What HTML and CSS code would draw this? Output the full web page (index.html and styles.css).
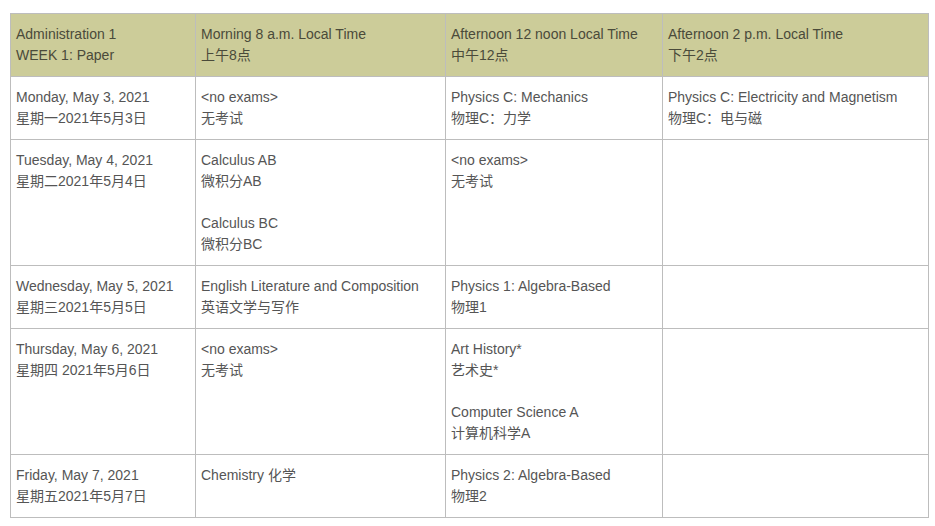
FILE: index.html
```html
<!DOCTYPE html>
<html lang="zh-CN">
<head>
<meta charset="utf-8">
<link rel="stylesheet" href="styles.css">
</head>
<body>
<table class="schedule">
  <colgroup>
    <col class="c1"><col class="c2"><col class="c3"><col class="c4">
  </colgroup>
  <thead>
    <tr>
      <th>Administration 1<br>WEEK 1: Paper</th>
      <th>Morning 8 a.m. Local Time<br>上午8点</th>
      <th>Afternoon 12 noon Local Time<br>中午12点</th>
      <th>Afternoon 2 p.m. Local Time<br>下午2点</th>
    </tr>
  </thead>
  <tbody>
    <tr>
      <td>Monday, May 3, 2021<br>星期一2021年5月3日</td>
      <td>&lt;no exams&gt;<br>无考试</td>
      <td>Physics C: Mechanics<br>物理C：力学</td>
      <td>Physics C: Electricity and Magnetism<br>物理C：电与磁</td>
    </tr>
    <tr>
      <td>Tuesday, May 4, 2021<br>星期二2021年5月4日</td>
      <td>Calculus AB<br>微积分AB<br><br>Calculus BC<br>微积分BC</td>
      <td>&lt;no exams&gt;<br>无考试</td>
      <td></td>
    </tr>
    <tr>
      <td>Wednesday, May 5, 2021<br>星期三2021年5月5日</td>
      <td>English Literature and Composition<br>英语文学与写作</td>
      <td>Physics 1: Algebra-Based<br>物理1</td>
      <td></td>
    </tr>
    <tr>
      <td>Thursday, May 6, 2021<br>星期四 2021年5月6日</td>
      <td>&lt;no exams&gt;<br>无考试</td>
      <td>Art History*<br>艺术史*<br><br>Computer Science A<br>计算机科学A</td>
      <td></td>
    </tr>
    <tr>
      <td>Friday, May 7, 2021<br>星期五2021年5月7日</td>
      <td>Chemistry 化学</td>
      <td>Physics 2: Algebra-Based<br>物理2</td>
      <td></td>
    </tr>
  </tbody>
</table>
</body>
</html>
```
FILE: styles.css
```css
html, body {
  margin: 0;
  background: #ffffff;
}
body {
  padding: 13px 0 0 10px;
  font-family: Arial, "Liberation Sans", "Noto Sans CJK SC", sans-serif;
  font-size: 14px;
  line-height: 21px;
  color: #555555;
}
.schedule {
  border-collapse: collapse;
  table-layout: fixed;
  width: 918px;
}
.c1 { width: 185px; }
.c2 { width: 250px; }
.c3 { width: 217px; }
.c4 { width: 266px; }
.schedule th,
.schedule td {
  border: 1px solid #bdbdbd;
  padding: 10px 5px;
  text-align: left;
  vertical-align: top;
  font-weight: normal;
}
.schedule th {
  background: #cccc99;
  color: #4a4a3a;
}
```
